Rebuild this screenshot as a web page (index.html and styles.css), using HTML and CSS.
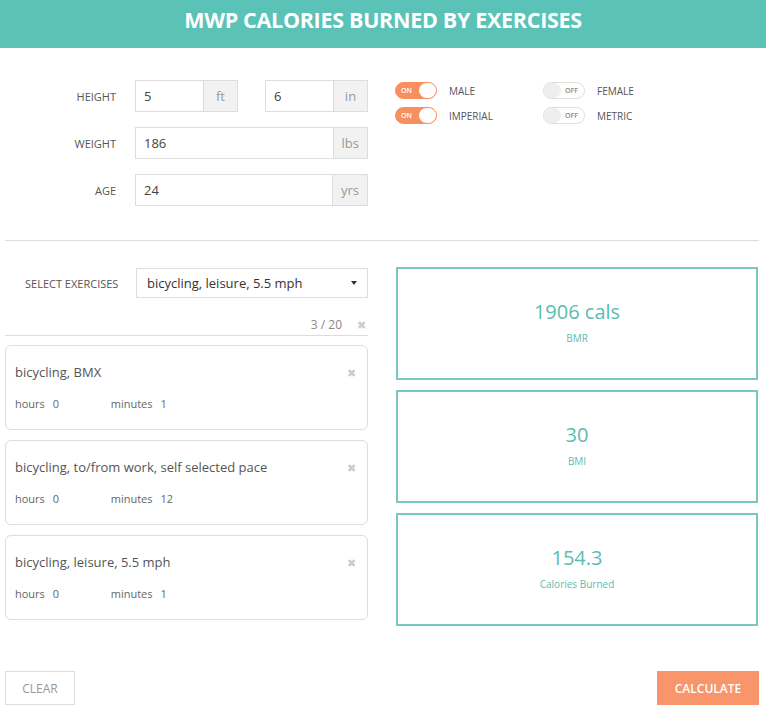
FILE: index.html
```html
<!DOCTYPE html>
<html lang="en">
<head>
  <meta charset="UTF-8">
  <meta name="viewport" content="width=device-width, initial-scale=1.0">
  <title>MWP Calories Burned by Exercises</title>
  <link rel="stylesheet" href="styles.css">
</head>
<body>

  <header class="top">
    <h1>MWP Calories Burned by Exercises</h1>
  </header>

  <div class="wrap">
    <section class="profile">
      <div class="fields">
        <div class="row">
          <label>Height</label>
          <div class="group small">
            <input type="text" value="5">
            <span class="addon">ft</span>
          </div>
          <div class="group small">
            <input type="text" value="6">
            <span class="addon">in</span>
          </div>
        </div>
        <div class="row">
          <label>Weight</label>
          <div class="group">
            <input type="text" value="186">
            <span class="addon">lbs</span>
          </div>
        </div>
        <div class="row">
          <label>Age</label>
          <div class="group">
            <input type="text" value="24">
            <span class="addon">yrs</span>
          </div>
        </div>
      </div>

      <div class="switches">
        <div class="switch-row">
          <div class="switch-item">
            <span class="toggle on"><span class="txt">ON</span><span class="knob"></span></span>
            <span class="switch-label">Male</span>
          </div>
          <div class="switch-item">
            <span class="toggle off"><span class="knob"></span><span class="txt">OFF</span></span>
            <span class="switch-label">Female</span>
          </div>
        </div>
        <div class="switch-row">
          <div class="switch-item">
            <span class="toggle on"><span class="txt">ON</span><span class="knob"></span></span>
            <span class="switch-label">Imperial</span>
          </div>
          <div class="switch-item">
            <span class="toggle off"><span class="knob"></span><span class="txt">OFF</span></span>
            <span class="switch-label">Metric</span>
          </div>
        </div>
      </div>
    </section>

    <hr class="divider">

    <section class="calc">
      <div class="left">
        <div class="select-row">
          <label>Select exercises</label>
          <div class="select">
            <span>bicycling, leisure, 5.5 mph</span>
            <span class="caret"></span>
          </div>
        </div>

        <div class="counter">
          <span>3 / 20</span>
          <span class="close">&#10006;</span>
        </div>

        <div class="card">
          <div class="card-head">
            <span class="name">bicycling, BMX</span>
            <span class="close">&#10006;</span>
          </div>
          <div class="time">
            <span class="unit">hours</span><span class="val">0</span>
            <span class="unit">minutes</span><span class="val">1</span>
          </div>
        </div>

        <div class="card">
          <div class="card-head">
            <span class="name">bicycling, to/from work, self selected pace</span>
            <span class="close">&#10006;</span>
          </div>
          <div class="time">
            <span class="unit">hours</span><span class="val">0</span>
            <span class="unit">minutes</span><span class="val">12</span>
          </div>
        </div>

        <div class="card">
          <div class="card-head">
            <span class="name">bicycling, leisure, 5.5 mph</span>
            <span class="close">&#10006;</span>
          </div>
          <div class="time">
            <span class="unit">hours</span><span class="val">0</span>
            <span class="unit">minutes</span><span class="val">1</span>
          </div>
        </div>
      </div>

      <div class="results">
        <div class="box">
          <div class="num">1906 cals</div>
          <div class="cap">BMR</div>
        </div>
        <div class="box">
          <div class="num">30</div>
          <div class="cap">BMI</div>
        </div>
        <div class="box">
          <div class="num">154.3</div>
          <div class="cap">Calories Burned</div>
        </div>
      </div>
    </section>

    <div class="actions">
      <button class="btn clear">Clear</button>
      <button class="btn calculate">Calculate</button>
    </div>
  </div>

</body>
</html>
```

FILE: styles.css
```css
body {
  margin: 0;
  font-family: 'Open Sans', 'Liberation Sans', sans-serif;
  color: #555;
  background-color: #fff;
}

.top {
  background-color: #5bc2b7;
  height: 48px;
  display: flex;
  align-items: center;
  justify-content: center;
}

.top h1 {
  margin: 0 0 10px;
  color: #fff;
  font-size: 21.5px;
  font-weight: 700;
  text-transform: uppercase;
  letter-spacing: -0.3px;
}

.wrap {
  padding: 0 7px 0 5px;
}

/* profile */

.profile {
  display: flex;
  margin-top: 32px;
}

.fields {
  width: 363px;
  display: flex;
  flex-direction: column;
  gap: 15px;
}

.row {
  display: flex;
  align-items: center;
}

.row label {
  width: 111px;
  padding-right: 19px;
  text-align: right;
  font-size: 11px;
  text-transform: uppercase;
}

.group {
  display: flex;
  height: 32px;
  width: 233px;
  box-sizing: border-box;
  border: 1px solid #ddd;
}

.group.small {
  width: 103px;
}

.group.small + .group.small {
  margin-left: 27px;
}

.group input {
  flex: 1;
  min-width: 0;
  border: 0;
  padding: 0 0 0 8px;
  font-family: inherit;
  font-size: 13px;
  color: #444;
  background: transparent;
}

.group .addon {
  background-color: #f2f2f2;
  border-left: 1px solid #ddd;
  color: #999;
  font-size: 13px;
  padding: 0 8px;
  display: flex;
  align-items: center;
  min-width: 17px;
  justify-content: center;
}

.switches {
  margin-left: 27px;
  margin-top: 2px;
  display: flex;
  flex-direction: column;
  gap: 8px;
}

.switch-row {
  display: flex;
}

.switch-item {
  width: 148px;
  display: flex;
  align-items: center;
}

.toggle {
  width: 42px;
  height: 17px;
  box-sizing: border-box;
  border-radius: 9px;
  display: flex;
  align-items: center;
  font-size: 7px;
  font-weight: 600;
}

.toggle.on {
  background-color: #f78f5e;
  border: 1px solid #f78f5e;
  color: #fff;
  justify-content: space-between;
  padding-left: 5px;
}

.toggle.off {
  background-color: #fff;
  border: 1px solid #ddd;
  color: #888;
  justify-content: space-between;
  padding-right: 6px;
}

.toggle .knob {
  width: 17px;
  height: 15px;
  border-radius: 8px;
  background-color: #fff;
}

.toggle.off .knob {
  background-color: #eee;
}

.switch-label {
  margin-left: 12px;
  font-size: 10px;
  text-transform: uppercase;
  color: #555;
}

.divider {
  border: 0;
  border-top: 1px solid #ddd;
  margin: 34px 0 26px;
}

/* exercises */

.calc {
  display: flex;
  gap: 28px;
}

.left {
  width: 363px;
}

.select-row {
  display: flex;
  align-items: center;
  margin-top: 1px;
}

.select-row label {
  width: 131px;
  padding-left: 20px;
  box-sizing: border-box;
  font-size: 11px;
  text-transform: uppercase;
}

.select {
  flex: 1;
  height: 30px;
  box-sizing: border-box;
  border: 1px solid #ddd;
  display: flex;
  align-items: center;
  justify-content: space-between;
  padding: 0 10px;
  font-size: 13px;
  color: #333;
}

.caret {
  width: 0;
  height: 0;
  border-left: 3px solid transparent;
  border-right: 3px solid transparent;
  border-top: 4px solid #333;
}

.counter {
  display: flex;
  justify-content: flex-end;
  align-items: flex-end;
  gap: 15px;
  height: 38px;
  padding: 0 1px 2px 0;
  box-sizing: border-box;
  border-bottom: 1px solid #ddd;
  font-size: 12px;
  color: #888;
  margin-bottom: 9px;
}

.close {
  color: #ccc;
  font-size: 11px;
  padding-right: 1px;
}

.counter .close {
  padding-bottom: 1px;
}

.card {
  height: 85px;
  box-sizing: border-box;
  border: 1px solid #ddd;
  border-radius: 6px;
  padding: 17px 9px 0 9px;
  margin-bottom: 10px;
}

.card-head {
  display: flex;
  justify-content: space-between;
  align-items: center;
}

.card-head .name {
  font-size: 13px;
  color: #555;
}

.card-head .close {
  margin-right: 1px;
}

.time {
  margin-top: 15px;
  font-size: 11px;
  color: #666;
}

.time .val {
  margin-left: 8px;
  display: inline-block;
  width: 55px;
}

/* results */

.results {
  width: 362px;
  display: flex;
  flex-direction: column;
  gap: 10px;
}

.box {
  height: 113px;
  box-sizing: border-box;
  border: 2px solid #7ac7be;
  display: flex;
  flex-direction: column;
  align-items: center;
  justify-content: center;
  color: #5bbcb1;
}

.box .num {
  font-size: 20px;
  margin-top: -4px;
}

.box .cap {
  font-size: 10px;
  margin-top: 6px;
}

.actions {
  display: flex;
  justify-content: space-between;
  margin-top: 41px;
}

.btn {
  height: 34px;
  border: 1px solid #ddd;
  font-family: inherit;
  font-size: 12px;
  text-transform: uppercase;
  padding: 0 15px;
  cursor: pointer;
}

.btn.clear {
  background-color: #fff;
  color: #999;
  width: 70px;
}

.btn.calculate {
  background-color: #f9956a;
  border-color: #f9956a;
  color: #fff;
  font-weight: 600;
  width: 102px;
}
```
